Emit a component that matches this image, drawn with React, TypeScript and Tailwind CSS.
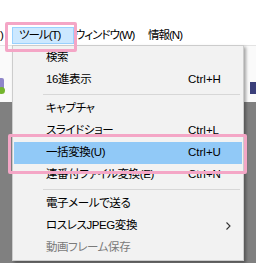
import React from "react";

type Item =
  | { kind: "item"; label: string; shortcut?: string; active?: boolean; disabled?: boolean; submenu?: boolean }
  | { kind: "sep" };

const items: Item[] = [
  { kind: "item", label: "検索" },
  { kind: "item", label: "16進表示", shortcut: "Ctrl+H" },
  { kind: "sep" },
  { kind: "item", label: "キャプチャ" },
  { kind: "item", label: "スライドショー", shortcut: "Ctrl+L" },
  { kind: "item", label: "一括変換(U)", shortcut: "Ctrl+U", active: true },
  { kind: "item", label: "連番付ファイル変換(E)", shortcut: "Ctrl+N" },
  { kind: "sep" },
  { kind: "item", label: "電子メールで送る" },
  { kind: "item", label: "ロスレスJPEG変換", submenu: true },
  { kind: "item", label: "動画フレーム保存", disabled: true },
];

const font = "font-['Liberation_Sans','Noto_Sans_CJK_JP',sans-serif] [font-feature-settings:'palt']";

const App = () => {
  return (
    <div className={`relative w-[256px] h-[263px] overflow-hidden bg-white text-[11.5px] text-black ${font}`}>
      {/* menu bar */}
      <div className="h-[45px] flex items-end pb-[1px] bg-white tracking-[-1px]">
        <div className="h-[17px] w-[12px] flex items-center">)</div>
        <div className="h-[17px] w-[62px] flex items-center pl-[6px] bg-[#cce8ff] border border-[#99d1ff]">ツール(T)</div>
        <div className="h-[17px] w-[74px] flex items-center pl-[1px]">ウィンドウ(W)</div>
        <div className="h-[17px] flex items-center">情報(N)</div>
      </div>

      {/* toolbar strip */}
      <div className="h-[57px] bg-[#fafafa] border-t border-[#e3e3e3] relative">
        <div className="absolute left-[-6px] top-[32px] w-[10px] h-[12px] bg-[#8f86c9] rounded-[2px]" />
        <div className="absolute left-[-2px] top-[41px] w-[7px] h-[7px] bg-[#74b52e] rounded-full" />
        <div className="absolute right-0 top-[36px] w-[6px] h-[12px] bg-[#3b3f7a]" />
      </div>

      {/* workspace */}
      <div className="h-[161px] bg-[#808080]" />

      {/* dropdown */}
      <div className="absolute left-[12px] top-[45px] w-[232px] bg-[#f2f2f2] border border-[#cccccc] p-[1px] shadow-[2px_2px_3px_rgba(0,0,0,0.35)]">
        {items.map((it, i) =>
          it.kind === "sep" ? (
            <div key={i} className="h-[7px] flex items-center pl-[29px] pr-[2px]">
              <div className="h-px w-full bg-[#d7d7d7]" />
            </div>
          ) : (
            <div
              key={i}
              className={`relative h-[22px] flex items-center pl-[32px] ${it.active ? "bg-[#91c9f7]" : ""} ${
                it.disabled ? "text-[#7a7a7a]" : ""
              }`}
            >
              <span className="w-[142px] whitespace-nowrap tracking-[-0.4px]">{it.label}</span>
              {it.shortcut && <span>{it.shortcut}</span>}
              {it.submenu && (
                <svg className="absolute left-[212px] top-[7px]" width="5" height="8" viewBox="0 0 5 8">
                  <path d="M0.5 0.5 L4 4 L0.5 7.5" fill="none" stroke="#333" strokeWidth="1.1" />
                </svg>
              )}
            </div>
          )
        )}
      </div>

      {/* annotation boxes */}
      <div className="absolute left-[5px] top-[22px] w-[72px] h-[30px] border-[3px] border-[#f4a6c6] rounded-[2px]" />
      <div className="absolute left-[8px] top-[134px] w-[239px] h-[40px] border-[3px] border-[#f4a6c6] rounded-[2px]" />
    </div>
  );
};

export default App;
